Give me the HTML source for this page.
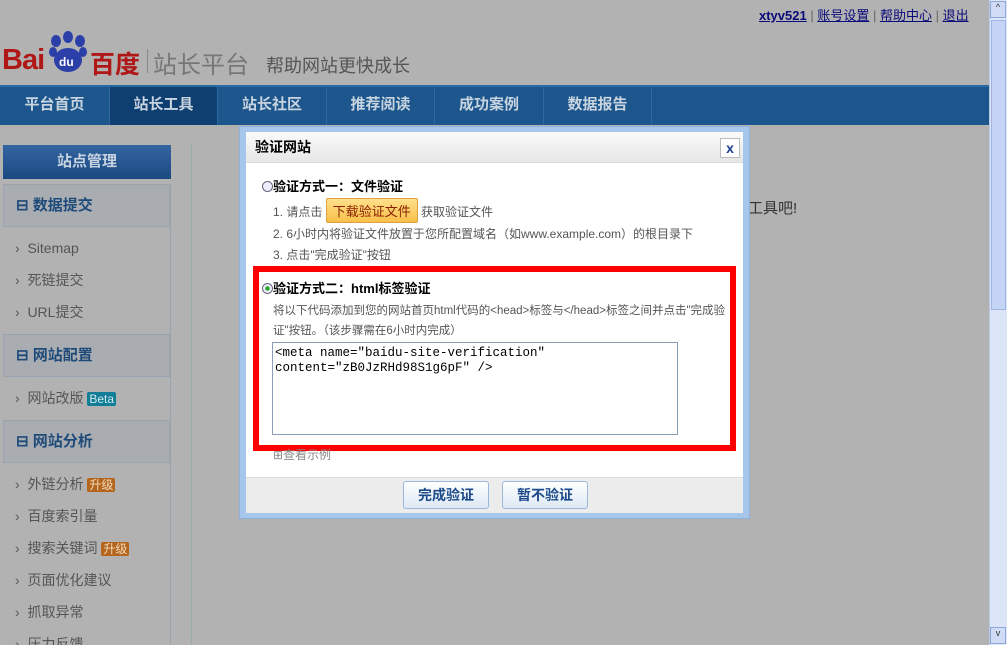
<!DOCTYPE html>
<html><head><meta charset="utf-8"><style>
*{margin:0;padding:0;box-sizing:border-box}
html,body{width:1007px;height:645px;overflow:hidden}
body{background:#b2b2b2;font-family:"Liberation Sans","Noto Sans CJK SC",sans-serif;position:relative;font-size:13px}
.a{position:absolute}
.top a{color:#0a0a7a;text-decoration:underline;font-size:13px}
.nav{left:0;top:85px;width:989px;height:40px;background:#1c568c;border-top:2px solid #2a6aa3}
.nav div{position:absolute;top:0;height:38px;line-height:36px;color:#c8d4e0;font-weight:bold;font-size:15px;text-align:center;border-right:1px solid #2d6aa0}
.side{left:3px;width:168px}
.sec{background:#a9adb1;border:1px solid #9aa4ae;height:43px;line-height:41px;color:#1e4a7a;font-weight:bold;font-size:15px;padding-left:12px}
.it{height:32px;line-height:32px;color:#555;font-size:14px;padding-left:12px}
.tag{color:#f0d8b8;background:#b5661e;font-size:12px;padding:0 2px;border-radius:2px}
.dlg{left:239px;top:126px;width:511px;height:393px;background:#a6c6ec;border:1px solid #8eb0da}
.in{left:6px;top:5px;width:497px;height:381px;background:#fff}
.g{color:#555;font-size:12px}
</style></head><body>
<div class="a top" style="left:759px;top:5px;color:#666">
<a style="font-weight:bold">xtyv521</a> | <a>账号设置</a> | <a>帮助中心</a> | <a>退出</a></div>
<div class="a" style="left:2px;top:44px;font-size:29px;font-weight:bold;color:#b01818;letter-spacing:-1px">Bai</div>
<svg class="a" style="left:47px;top:30px" width="42" height="44"><g fill="#2b3fa8"><ellipse cx="21" cy="7" rx="5" ry="6"/><ellipse cx="33" cy="11" rx="5" ry="6"/><ellipse cx="9" cy="11" rx="5" ry="6"/><ellipse cx="21" cy="30" rx="14" ry="12"/><ellipse cx="6" cy="22" rx="4" ry="5"/><ellipse cx="36" cy="22" rx="4" ry="5"/></g><text x="12" y="36" font-size="12" fill="#fff" font-weight="bold" font-family="Liberation Sans">du</text></svg>
<div class="a" style="left:90px;top:45px;font-size:25px;font-weight:bold;color:#b01818">百度</div>
<div class="a" style="left:147px;top:49px;width:1px;height:24px;background:#888"></div>
<div class="a" style="left:153px;top:45px;font-size:24px;color:#777">站长平台</div>
<div class="a" style="left:266px;top:52px;font-size:18px;color:#555">帮助网站更快成长</div>
<div class="a nav">
<div style="left:0;width:110px">平台首页</div>
<div style="left:110px;width:108px;background:#0f3f70">站长工具</div>
<div style="left:218px;width:109px">站长社区</div>
<div style="left:327px;width:108px">推荐阅读</div>
<div style="left:435px;width:109px">成功案例</div>
<div style="left:544px;width:108px">数据报告</div>
</div>
<div class="a side" style="top:145px;height:34px;background:linear-gradient(#3464a0,#1b4a82);color:#c8d4e2;font-weight:bold;font-size:15px;text-align:center;line-height:33px">站点管理</div>
<div class="a side" style="top:184px;height:461px;border-right:1px solid #9aa4ae;overflow:hidden">
<div class="sec">⊟ 数据提交</div>
<div style="height:5px"></div>
<div class="it">›&nbsp; Sitemap</div><div class="it">›&nbsp; 死链提交</div><div class="it">›&nbsp; URL提交</div>
<div style="height:6px"></div>
<div class="sec">⊟ 网站配置</div>
<div style="height:5px"></div>
<div class="it">›&nbsp; 网站改版 <span class="tag" style="background:#117d96;color:#d0e8f0">Beta</span></div>
<div style="height:6px"></div>
<div class="sec">⊟ 网站分析</div>
<div style="height:5px"></div>
<div class="it">›&nbsp; 外链分析 <span class="tag">升级</span></div><div class="it">›&nbsp; 百度索引量</div><div class="it">›&nbsp; 搜索关键词 <span class="tag">升级</span></div><div class="it">›&nbsp; 页面优化建议</div><div class="it">›&nbsp; 抓取异常</div><div class="it">›&nbsp; 压力反馈</div>
</div>
<div class="a" style="left:191px;top:145px;width:1px;height:500px;background:#9aa"></div>
<div class="a" style="left:748px;top:197px;font-size:15px;color:#333">工具吧!</div>
<div class="a" style="left:989px;top:0;width:18px;height:645px;background:#dde6f8;border-left:1px solid #b8c8e8"></div>
<div class="a" style="left:990px;top:1px;width:16px;height:17px;background:#d0dcf6;border:1px solid #8fa8d8;font-size:9px;text-align:center;color:#333">^</div>
<div class="a" style="left:991px;top:20px;width:15px;height:290px;background:#c4d4f6;border:1px solid #9fb4e0"></div>
<div class="a" style="left:990px;top:627px;width:16px;height:17px;background:#d0dcf6;border:1px solid #8fa8d8;font-size:9px;text-align:center;color:#333">v</div>

<div class="a dlg"><div class="a in">
<div class="a" style="left:0;top:0;width:497px;height:31px;background:linear-gradient(#fafafa,#e6e6e6);border-bottom:1px solid #ddd;font-weight:bold;font-size:14px;line-height:31px;padding-left:9px">验证网站</div>
<div class="a" style="left:474px;top:6px;width:20px;height:20px;border:1px solid #bbb;background:#fff;color:#1a3d8a;font-weight:bold;text-align:center;line-height:18px;font-size:14px">x</div>
<div class="a" style="left:16px;top:44px;font-weight:bold;font-size:13px"><span style="display:inline-block;width:11px;height:11px;border:1px solid #667;border-radius:50%;vertical-align:-1px;background:#eef"></span>验证方式一：文件验证</div>
<div class="a g" style="left:27px;top:66px">1. 请点击 <span style="display:inline-block;background:linear-gradient(#ffe08a,#f9c04a);border:1px solid #e0a040;color:#8a2000;font-size:13px;padding:2px 6px;border-radius:2px">下载验证文件</span> 获取验证文件</div>
<div class="a g" style="left:27px;top:93px">2. 6小时内将验证文件放置于您所配置域名（如www.example.com）的根目录下</div>
<div class="a g" style="left:27px;top:114px">3. 点击"完成验证"按钮</div>
<div class="a" style="left:7px;top:134px;width:483px;height:185px;border:6px solid #f00"></div>
<div class="a" style="left:16px;top:146px;font-weight:bold;font-size:13px"><span style="display:inline-block;width:11px;height:11px;border:1px solid #667;border-radius:50%;vertical-align:-1px;background:radial-gradient(#2a2 30%,#eef 40%)"></span>验证方式二：html标签验证</div>
<div class="a g" style="left:27px;top:169px;width:460px;line-height:20px;font-size:11.5px">将以下代码添加到您的网站首页html代码的&lt;head&gt;标签与&lt;/head&gt;标签之间并点击"完成验证"按钮。（该步骤需在6小时内完成）</div>
<div class="a" style="left:26px;top:210px;width:406px;height:93px;border:1px solid #8aa0b8;font-family:'Liberation Mono',monospace;font-size:12.5px;padding:3px 2px;line-height:15px">&lt;meta name="baidu-site-verification"<br>content="zB0JzRHd98S1g6pF" /&gt;</div>
<div class="a g" style="left:27px;top:314px;color:#888">⊞查看示例</div>
<div class="a" style="left:0;top:345px;width:497px;height:36px;background:#ececec;border-top:1px solid #ddd"></div>
<div class="a" style="left:157px;top:349px;width:86px;height:28px;border:1px solid #9ab8dc;border-radius:3px;background:linear-gradient(#fff,#dde8f4);color:#1c4a8a;font-weight:bold;font-size:14px;text-align:center;line-height:26px">完成验证</div>
<div class="a" style="left:256px;top:349px;width:86px;height:28px;border:1px solid #9ab8dc;border-radius:3px;background:linear-gradient(#fff,#dde8f4);color:#1c4a8a;font-weight:bold;font-size:14px;text-align:center;line-height:26px">暂不验证</div>
</div></div>
</body></html>
